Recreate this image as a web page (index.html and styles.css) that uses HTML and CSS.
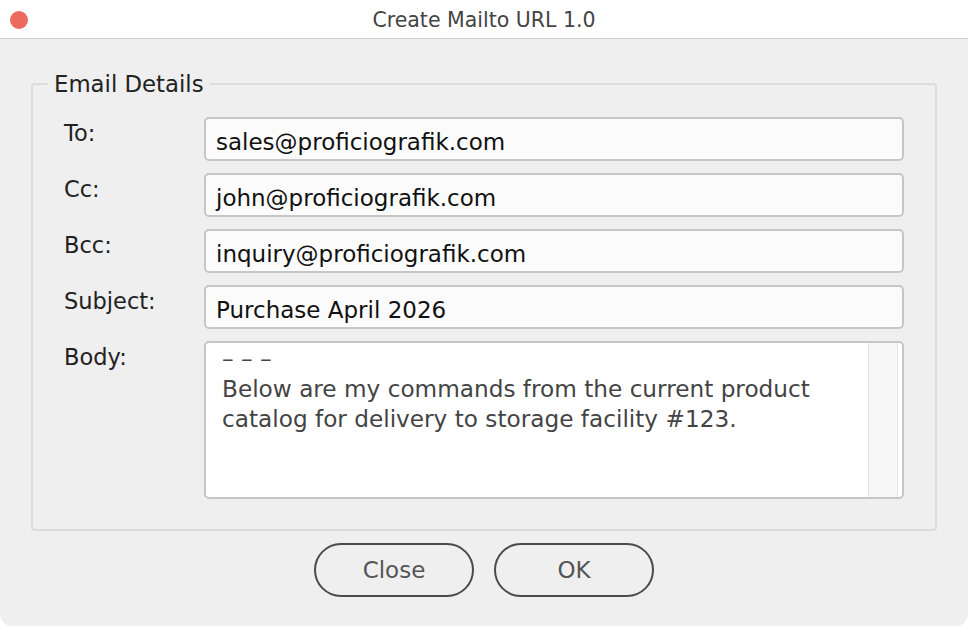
FILE: index.html
```html
<!DOCTYPE html>
<html lang="en">
<head>
<meta charset="utf-8">
<title>Create Mailto URL 1.0</title>
<link rel="stylesheet" href="styles.css">
</head>
<body>
<div class="window">
  <header class="titlebar">
    <span class="close-dot"></span>
    <span class="title">Create Mailto URL 1.0</span>
    <span class="spacer"></span>
  </header>
  <main class="content">
    <fieldset class="group">
      <legend class="legend">Email Details</legend>
      <div class="form">
        <label class="label">To:</label>
        <div class="field">sales@proficiografik.com</div>
        <label class="label">Cc:</label>
        <div class="field">john@proficiografik.com</div>
        <label class="label">Bcc:</label>
        <div class="field">inquiry@proficiografik.com</div>
        <label class="label">Subject:</label>
        <div class="field">Purchase April 2026</div>
        <label class="label">Body:</label>
        <div class="area">
          <div class="area-text">– – –<br>Below are my commands from the current product<br>catalog for delivery to storage facility #123.</div>
          <div class="scrollbar"></div>
        </div>
      </div>
    </fieldset>
    <div class="buttons">
      <button class="btn">Close</button>
      <button class="btn">OK</button>
    </div>
  </main>
</div>
</body>
</html>
```
FILE: styles.css
```css
* { box-sizing: border-box; }
html, body { margin: 0; padding: 0; background: #ffffff; }
body { font-family: "DejaVu Sans", "Liberation Sans", sans-serif; }

.window {
  width: 968px;
  height: 626px;
  background: #efefef;
  border-radius: 0 0 12px 12px;
  overflow: hidden;
  display: flex;
  flex-direction: column;
}

.titlebar {
  height: 39px;
  background: #ffffff;
  border-bottom: 1px solid #cfcfcf;
  display: flex;
  align-items: center;
  padding: 1px 10px 0 10px;
}
.close-dot {
  width: 18px;
  height: 18px;
  border-radius: 50%;
  background: #ec6a5e;
  flex: none;
}
.spacer { width: 18px; flex: none; }
.title {
  flex: 1;
  text-align: center;
  font-size: 20.5px;
  color: #444444;
}

.content {
  padding: 0 31px;
}

.group {
  margin: 32px 0 0 0;
  padding: 20px 31px 30px 31px;
  border: 2px solid #dcdcdc;
  border-radius: 4px;
}
.legend {
  padding: 0 6px;
  margin-left: -16px;
  font-size: 22.8px;
  line-height: 26px;
  color: #222222;
}

.form {
  display: grid;
  grid-template-columns: 140px 700px;
  grid-template-rows: 44px 44px 44px 44px 158px;
  row-gap: 12px;
}
.label {
  font-size: 22.5px;
  line-height: 30px;
  padding-top: 1px;
  color: #222222;
}
.field {
  background: #fbfbfb;
  border: 2px solid #c6c6c6;
  border-radius: 5px;
  padding: 6px 10px 0 10px;
  font-size: 23px;
  line-height: 34px;
  color: #111111;
  white-space: nowrap;
}
.area {
  height: 158px;
  background: #ffffff;
  border: 2px solid #c6c6c6;
  border-radius: 5px;
  display: flex;
}
.area-text {
  flex: 1;
  padding: 1px 16px 0 16px;
  font-size: 23.2px;
  line-height: 30px;
  color: #444444;
  white-space: nowrap;
  overflow: hidden;
}
.scrollbar {
  width: 30px;
  margin-right: 4px;
  background: #f7f7f7;
  border-left: 1px solid #e6e6e6;
  border-right: 1px solid #e6e6e6;
}

.buttons {
  display: flex;
  justify-content: center;
  gap: 20px;
  margin-top: 12px;
}
.btn {
  width: 160px;
  height: 54px;
  border: 2px solid #4a4a4a;
  border-radius: 27px;
  background: #efefef;
  font-family: "DejaVu Sans", "Liberation Sans", sans-serif;
  font-size: 23px;
  color: #555555;
  padding: 0;
}
```
